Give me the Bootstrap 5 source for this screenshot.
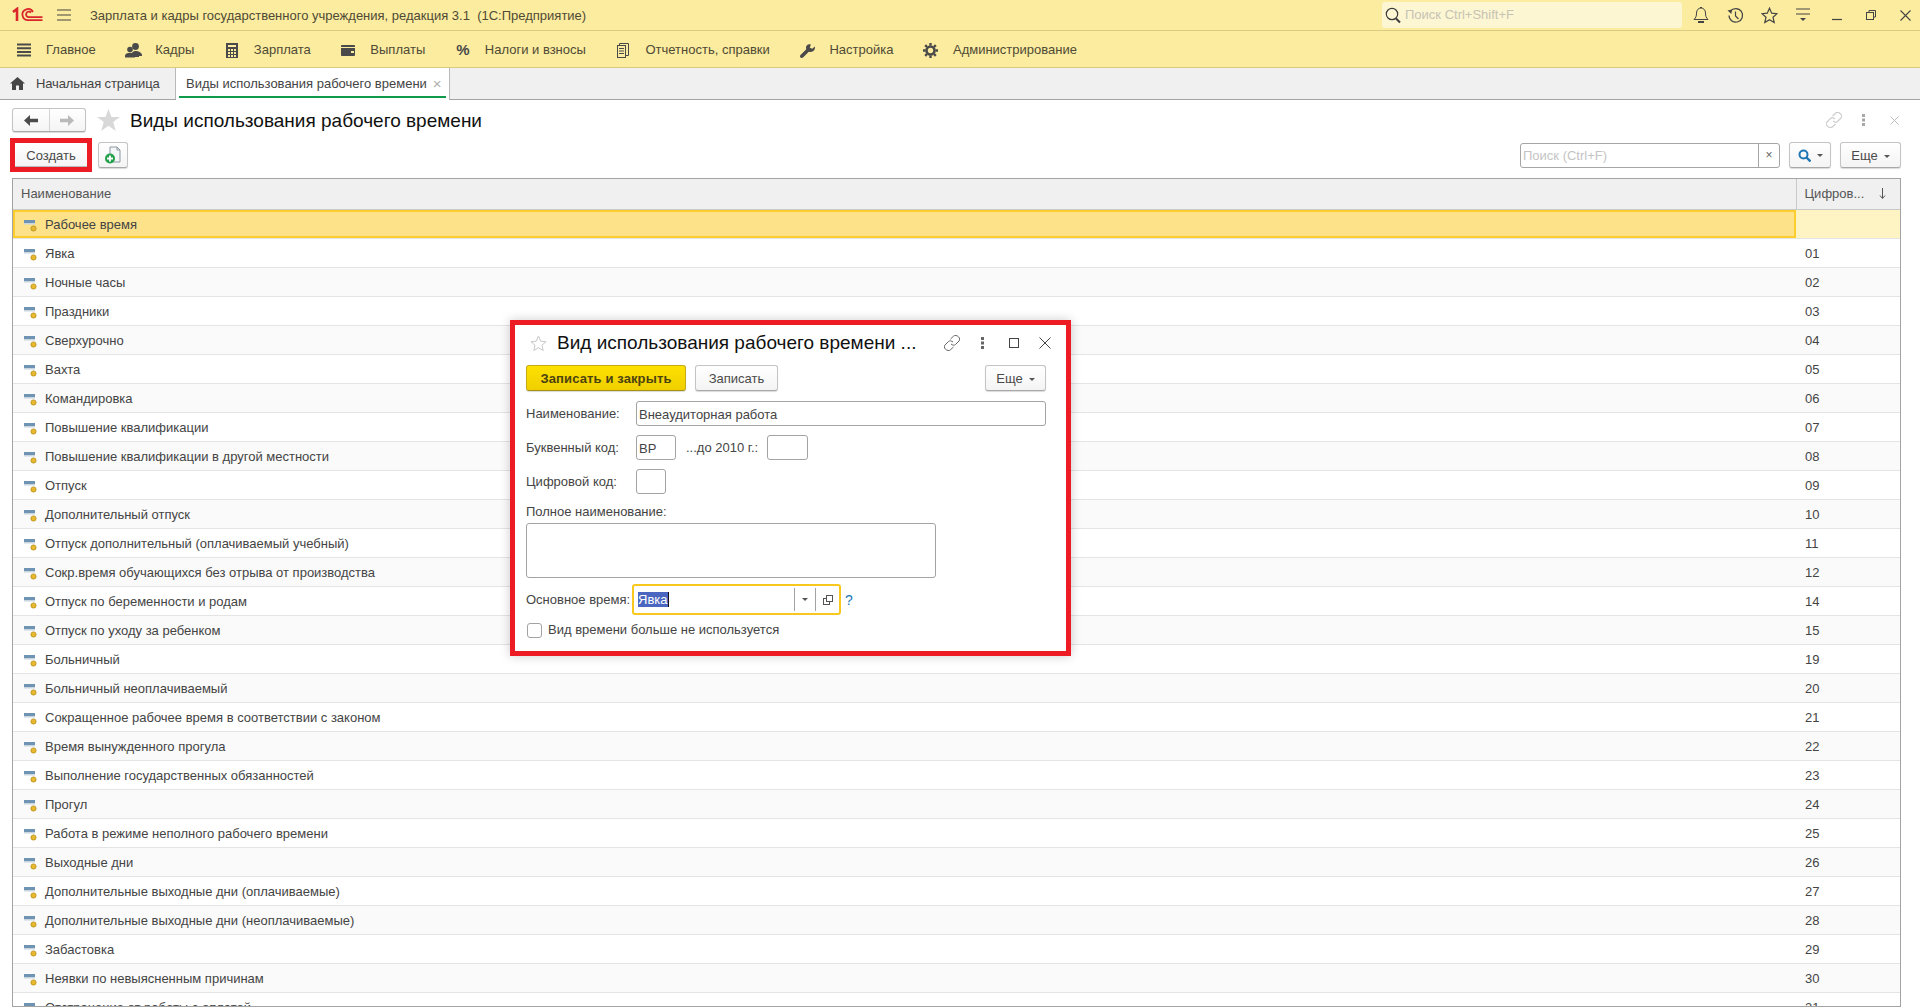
<!DOCTYPE html>
<html lang="ru">
<head>
<meta charset="UTF-8">
<title>Виды использования рабочего времени</title>
<link href="https://cdn.jsdelivr.net/npm/bootstrap@5.3.0/dist/css/bootstrap.min.css" rel="stylesheet">
<style>
    html, body { height: 100%; }
    body { font-family: "Liberation Sans", Arial, sans-serif; font-size: 13px; line-height: 16px; color: #444; overflow: hidden; background: #fff; }
    svg { display: block; flex: none; }

    /* верхние полосы */
    .top-bar { height: 31px; background: #fbec9f; border-bottom: 1px solid #d9cb80; flex: none; }
    .top-logo { margin-left: 12px; }
    .top-menu { margin-left: 10px; }
    .top-title { margin-left: 18px; padding-top: 2px; color: #4f4a35; white-space: pre; }
    .top-search { width: 300px; height: 26px; background: #fdf6d3; border-radius: 3px; padding-left: 3px; color: #c6c3b4; }
    .top-cell { width: 34px; height: 30px; }
    .top-cells { margin-left: 2px; margin-right: -2px; }
    .sect-bar { height: 37px; background: #fbec9f; border-bottom: 1px solid #d9cb80; padding: 2px 0 0 16px; flex: none; }
    .sect-item { margin-right: 29.6px; gap: 14px; color: #4f4a35; }
    .sect-ico { width: 16px; display: flex; justify-content: center; }
    .sect-pct { font-size: 15px; font-weight: 700; color: #4a4a4a; }
    .tab-bar { height: 32px; background: #f0f0f0; border-bottom: 1px solid #a3a3a3; flex: none; }
    .tab-home { width: 176px; padding-left: 10px; gap: 11px; border-right: 1px solid #b9b9b9; letter-spacing: -.12px; }
    .tab-open { width: 274px; background: #fff; border-right: 1px solid #b9b9b9; padding-left: 10px; position: relative; margin-bottom: -1px; color: #444; }
    .tab-open::after { content: ""; position: absolute; left: 3px; right: 3px; bottom: 2px; height: 2px; background: #0f9b4a; }
    .tab-close { margin-left: 6px; color: #b0b0b0; font-size: 15px; }

    /* кнопки 1С */
    .btn-1c { display: flex; align-items: center; justify-content: center; height: 26px; padding: 2px 0 0; font-size: 13px; line-height: 16px; color: #4a4a4a; background: linear-gradient(#fff, #f4f4f4); border: 1px solid #c4c4c4; border-bottom-color: #a8a8a8; border-radius: 3px; box-shadow: 0 1px 1px rgba(0,0,0,.15); }
    .btn-main { background: linear-gradient(#fde100, #f0cf00); border-color: #c7ab15; border-bottom-color: #a8900f; font-weight: 700; color: #4c4310; letter-spacing: .12px; }
    .caret-1c { width: 0; height: 0; border-left: 3px solid transparent; border-right: 3px solid transparent; border-top: 3px solid #555; margin-left: 6px; }

    /* шапка формы */
    .form-head { height: 24px; margin: 8px 0 0 12px; padding-right: 11px; flex: none; }
    .nav-pair { width: 74px; height: 24px; padding: 0; }
    .nav-half { height: 100%; flex: 1 1 0; }
    .nav-half + .nav-half { border-left: 1px solid #d4d4d4; }
    .nav-star { margin-left: 11px; }
    .big-title { font-size: 19px; line-height: 22px; padding-top: 2px; color: #111; margin-left: 10px; }
    .head-ico { width: 30px; }
    .tool-row { height: 34px; margin: 6px 0 0 10px; padding-right: 19px; flex: none; }
    .red-frame { border: 5px solid #ed1c24; width: 82px; height: 34px; }
    .red-frame .btn-1c { width: 100%; height: 24px; border: 0; border-bottom: 1px solid #bbb; border-radius: 0; box-shadow: none; }
    .add-btn { width: 30px; margin-left: 6px; padding: 0; }
    .find-btn { width: 42px; margin-left: 9px; padding: 0; }
    .more-list { width: 61px; margin-left: 9px; }
    .list-search { width: 260px; height: 25px; margin-left: auto; border: 1px solid #a5a5a5; border-radius: 3px; background: #fff; }
    .list-search-text { padding: 2px 0 0 2px; color: #c4c4c4; }
    .list-search-x { width: 21px; height: 100%; border-left: 1px solid #a5a5a5; color: #666; font-size: 12px; }

    /* список */
    .list-box { height: 829px; margin: 6px 19px 0 12px; border: 1px solid #a3a3a3; overflow: hidden; flex: none; }
    .list-table { table-layout: fixed; width: 100%; margin: 0; --bs-table-striped-bg: #fafafa; --bs-table-striped-color: #444; --bs-table-color: #444; --bs-table-bg: #fff; --bs-table-border-color: #e4e4e4; }
    .list-table th { height: 30px; padding: 0 8px; font-weight: 400; background: #f0f0f0; color: #555; vertical-align: middle; border-bottom: 1px solid #c8c8c8; }
    .list-table th + th { border-left: 1px solid #c8c8c8; padding: 0 14px 0 8px; }
    .col-code { width: 104px; }
    .list-table td { height: 29px; padding: 0 0 0 11px; vertical-align: middle; border-bottom: 1px solid #e4e4e4; }
    .list-table td + td { padding: 2px 0 0 9px; }
    .name-cell { display: flex; align-items: center; gap: 7px; }
    .name-cell span { padding-top: 2px; }
    .name-cell svg { margin-top: 3px; margin-bottom: -1px; }
    .list-table tr.row-cur td { --bs-table-accent-bg: transparent; background: #fef3c2; }
    .list-table tr.row-cur td:first-child { background: #fde28a; box-shadow: inset 0 0 0 2px #fbcd2d; }

    /* окно элемента */
    .item-win { position: absolute; left: 510px; top: 320px; width: 561px; height: 336px; border: 5px solid #ed1c24; background: #fff; padding: 0 20px 0 11px; box-shadow: 0 0 10px rgba(0,0,0,.2); }
    .win-head { height: 36px; }
    .win-star { margin-left: 4px; }
    .win-title { font-size: 19px; line-height: 22px; color: #111; margin-left: 10px; white-space: nowrap; min-width: 0; }
    .win-tools { margin-right: -14px; }
    .win-ico { width: 31px; }
    .win-btns { height: 26px; margin-top: 4px; gap: 9px; }
    .btn-save-close { width: 160px; }
    .btn-save { width: 83px; }
    .btn-more { width: 61px; margin-left: auto; }
    .fld { display: block; background: #fff; border: 1px solid #a3a3a3; border-radius: 3px; height: 25px; padding: 1px 2px 0; line-height: 23px; color: #444; }
    .fld-row { margin-top: 9px; height: 25px; }
    .win-btns + .fld-row { margin-top: 10px; }
    .fld-lbl { width: 110px; flex: none; padding-top: 1px; }
    .fld-code { width: 40px; }
    .lbl-old { margin-left: 10px; width: 81px; padding-top: 1px; }
    .fld-old { width: 41px; }
    .fld-num { width: 30px; }
    .lbl-full { margin-top: 10px; }
    .fld-full { width: 410px; height: 55px; margin-top: 3px; }
    .base-row { margin-top: 6px; height: 31px; }
    .base-lbl { width: 107px; }
    .base-fld { width: 209px; height: 31px; margin-left: -1px; border: 2px solid #f9c81f; padding: 0 0 0 4px; }
    .sel-text { background: #4a66c0; color: #fff; padding: 0; height: 15px; line-height: 15px; border-right: 1px solid #111; }
    .base-btn { width: 21px; height: 23px; border-left: 1px solid #a3a3a3; }
    .base-btn + .base-btn { width: 24px; }
    .chk-row { margin-top: 7px; }
    .chk-box { width: 15px; height: 15px; border: 1px solid #a3a3a3; border-radius: 3px; margin-left: 1px; margin-right: 6px; }
    .help-mark { color: #1c79b8; font-size: 14px; margin-left: 4px; }
</style>
</head>
<body class="d-flex flex-column">

<svg width="0" height="0" class="position-absolute">
    <defs>
        <symbol id="row-ico" viewBox="0 0 14 12">
            <rect x="0" y="0" width="11" height="3" fill="#6f93b3"/>
            <rect x="0" y="3" width="11" height="1.500" fill="#c9d6e0"/>
            <circle cx="9.500" cy="8.500" r="2.600" fill="#e8b92e" stroke="#b58f1a" stroke-width=".8"/>
        </symbol>
    </defs>
</svg>

<!-- заголовок окна -->
<div class="top-bar d-flex align-items-center">
    <svg class="top-logo" width="34" height="16" viewBox="0 0 34 16" fill="none" stroke="#d9262b">
        <path d="M1 5 L5 2 V14" stroke-width="2.600"/>
        <path d="M30.500 13.200 H16 A5.600 5.600 0 1 1 21 5" stroke-width="1.800"/>
        <path d="M30.500 10.200 H17 A2.800 2.800 0 1 1 19 5.600" stroke-width="1.800"/>
    </svg>
    <svg class="top-menu" width="16" height="12" viewBox="0 0 16 12" stroke="#444"><path d="M1 1H15M1 6H15M1 11H15" stroke-width="1.200"/></svg>
    <span class="top-title">Зарплата и кадры государственного учреждения, редакция 3.1  (1С:Предприятие)</span>
    <div class="top-search ms-auto d-flex align-items-center gap-1">
        <svg width="16" height="17" viewBox="0 0 16 17" fill="none" stroke="#3c3c3c"><circle cx="7" cy="7" r="5.700" stroke-width="1.200"/><path d="M11 11.500L15 15.500" stroke-width="2"/></svg>
        <span>Поиск Ctrl+Shift+F</span>
    </div>
    <div class="top-cells d-flex">
        <div class="top-cell d-flex align-items-center justify-content-center">
            <svg width="16" height="18" viewBox="0 0 16 18" fill="none" stroke="#444"><path d="M1 13.500 C3 11.500 3.500 10 3.500 7 C3.500 4 5.500 2 8 2 C10.500 2 12.500 4 12.500 7 C12.500 10 13 11.500 15 13.500Z"/><path d="M7 1.500H9"/><path d="M5 16H11" stroke-width="2"/></svg>
        </div>
        <div class="top-cell d-flex align-items-center justify-content-center">
            <svg width="17" height="17" viewBox="0 0 17 17" fill="none" stroke="#444"><path d="M3.400 4.200A6.800 6.800 0 1 1 2 8.500" stroke-width="1.200"/><path d="M0.500 3.500L5 2.500L4.400 7Z" fill="#444" stroke="none"/><path d="M8.500 4.500V9L11.500 12" stroke-width="1.200"/></svg>
        </div>
        <div class="top-cell d-flex align-items-center justify-content-center">
            <svg width="17" height="17" viewBox="0 0 17 17" fill="none" stroke="#444" stroke-width="1.200"><path d="M8.500 1.200L10.700 6.200L16 6.700L12 10.200L13.200 15.500L8.500 12.700L3.800 15.500L5 10.200L1 6.700L6.300 6.200Z"/></svg>
        </div>
        <div class="top-cell d-flex align-items-center justify-content-center">
            <svg width="16" height="14" viewBox="0 0 16 14" stroke="#444"><path d="M1 1H15M1 6H15"/><path d="M5 10H11L8 13Z" fill="#444" stroke="none"/></svg>
        </div>
        <div class="top-cell d-flex align-items-center justify-content-center">
            <svg width="10" height="12" viewBox="0 0 10 12" stroke="#444"><path d="M0 10.500H10" stroke-width="1.200"/></svg>
        </div>
        <div class="top-cell d-flex align-items-center justify-content-center">
            <svg width="10" height="10" viewBox="0 0 10 10" fill="none" stroke="#444"><rect x=".5" y="2.500" width="7" height="7"/><path d="M3 2.500V.5H9.500V7H7.500"/></svg>
        </div>
        <div class="top-cell d-flex align-items-center justify-content-center">
            <svg width="11" height="11" viewBox="0 0 11 11" stroke="#444"><path d="M.5 .5L10.500 10.500M10.500 .5L.5 10.500" stroke-width="1.100"/></svg>
        </div>
    </div>
</div>

<!-- панель разделов -->
<div class="sect-bar d-flex align-items-center">
    <div class="sect-item d-flex align-items-center">
        <span class="sect-ico"><svg width="14" height="14" viewBox="0 0 14 14" stroke="#4a4a4a" stroke-width="2"><path d="M0 1.500H14M0 5.200H14M0 8.900H14M0 12.600H14"/></svg></span>
        <span>Главное</span>
    </div>
    <div class="sect-item d-flex align-items-center">
        <span class="sect-ico"><svg width="17" height="15" viewBox="0 0 17 15" fill="#4a4a4a"><circle cx="10.500" cy="3.500" r="3.400"/><path d="M6 14C6 10 8 8 10.500 8C13 8 17 9.500 17 12V13H14V14Z"/><circle cx="5" cy="6.500" r="2.800"/><path d="M0 14V12.500C0 11 2.500 9.800 5 9.800C7.500 9.800 10 11 10 12.500V14.500H0Z"/></svg></span>
        <span>Кадры</span>
    </div>
    <div class="sect-item d-flex align-items-center">
        <span class="sect-ico"><svg width="12" height="15" viewBox="0 0 12 15" fill="#4a4a4a"><path fill-rule="evenodd" d="M0 0H12V15H0ZM2 2V4H10V2ZM2 6V8H4V6ZM5 6V8H7V6ZM8 6V8H10V6ZM2 9V11H4V9ZM5 9V11H7V9ZM8 9V11H10V9ZM2 12V14H4V12ZM5 12V14H7V12ZM8 12V14H10V12Z"/></svg></span>
        <span>Зарплата</span>
    </div>
    <div class="sect-item d-flex align-items-center">
        <span class="sect-ico"><svg width="14" height="11" viewBox="0 0 14 11" fill="#4a4a4a"><path d="M0 1C0 .5 .5 0 1 0H13C13.500 0 14 .5 14 1V2H0Z"/><path fill-rule="evenodd" d="M0 3H14V10C14 10.500 13.500 11 13 11H1C.5 11 0 10.500 0 10ZM10 6V8H13V6Z"/></svg></span>
        <span>Выплаты</span>
    </div>
    <div class="sect-item d-flex align-items-center">
        <span class="sect-ico sect-pct">%</span>
        <span>Налоги и взносы</span>
    </div>
    <div class="sect-item d-flex align-items-center">
        <span class="sect-ico"><svg width="12" height="15" viewBox="0 0 12 15" fill="none" stroke="#4a4a4a"><rect x=".5" y="2.500" width="8" height="12"/><path d="M2.500 2.500V.5H11.500V12.500H8.500M2 5.500H7M2 8H7M2 10.500H7"/></svg></span>
        <span>Отчетность, справки</span>
    </div>
    <div class="sect-item d-flex align-items-center">
        <span class="sect-ico"><svg width="15" height="15" viewBox="0 0 15 15" fill="#4a4a4a"><path d="M15 3.500L12.200 5.800L9.800 4.800L10.800 1.500C8.500 .6 6 2 6 4.500C6 5.200 6.100 5.700 6.300 6.200L.5 12C-.2 12.800 -.2 13.800 .5 14.500C1.200 15.200 2.200 15.200 3 14.500L8.800 8.700C11.800 9.800 15.500 7.500 15 3.500Z"/></svg></span>
        <span>Настройка</span>
    </div>
    <div class="sect-item d-flex align-items-center">
        <span class="sect-ico"><svg width="15" height="15" viewBox="0 0 15 15" fill="none" stroke="#4a4a4a"><circle cx="7.500" cy="7.500" r="4" stroke-width="2.600"/><path d="M7.500 0V2.500M7.500 12.500V15M0 7.500H2.500M12.500 7.500H15M2.200 2.200L4 4M11 11L12.800 12.800M12.800 2.200L11 4M4 11L2.200 12.800" stroke-width="2.400"/></svg></span>
        <span>Администрирование</span>
    </div>
</div>

<!-- вкладки -->
<div class="tab-bar d-flex">
    <div class="tab-home d-flex align-items-center">
        <svg width="15" height="13" viewBox="0 0 15 13" fill="#454545"><path d="M7.500 0L15 6.500H13V13H9V8.500H6V13H2V6.500H0Z"/></svg>
        <span>Начальная страница</span>
    </div>
    <div class="tab-open d-flex align-items-center">
        <span>Виды использования рабочего времени</span>
        <span class="tab-close">×</span>
    </div>
</div>

<!-- заголовок формы -->
<div class="form-head d-flex align-items-center">
    <div class="btn-1c nav-pair d-flex">
        <div class="nav-half d-flex align-items-center justify-content-center">
            <svg width="14" height="11" viewBox="0 0 14 11" fill="#4b4b4b"><path d="M0 5.500L6 0V3.800H14V7.200H6V11Z"/></svg>
        </div>
        <div class="nav-half d-flex align-items-center justify-content-center">
            <svg width="14" height="11" viewBox="0 0 14 11" fill="#b9b9b9"><path d="M14 5.500L8 0V3.800H0V7.200H8V11Z"/></svg>
        </div>
    </div>
    <svg class="nav-star" width="23" height="22" viewBox="0 0 23 22" fill="#d8d8d8"><path d="M11.500 0L14.500 8H23L16.200 13L18.800 22L11.500 16.800L4.200 22L6.800 13L0 8H8.500Z"/></svg>
    <span class="big-title">Виды использования рабочего времени</span>
    <div class="ms-auto d-flex align-items-center">
        <span class="head-ico d-flex justify-content-center"><svg width="16" height="16" viewBox="0 0 16 16" fill="none" stroke="#cfcfcf" stroke-width="1.200"><path d="M6.500 4L9.500 1.200C10.800 0 13 .3 14.500 1.800C16 3.300 16 5 15 6L11.500 9.500C10.300 10.600 8.500 10.300 7 9"/><path d="M9.500 12L6.500 14.800C5.200 16 3 15.700 1.500 14.200C0 12.700 0 11 1 10L4.500 6.500C5.700 5.400 7.500 5.700 9 7"/></svg></span>
        <span class="head-ico d-flex justify-content-center"><svg width="4" height="12" viewBox="0 0 4 12" fill="#a8a8a8"><rect x="0" y="0" width="3" height="3"/><rect x="0" y="4.500" width="3" height="3"/><rect x="0" y="9" width="3" height="3"/></svg></span>
        <span class="head-ico d-flex justify-content-center"><svg width="9" height="9" viewBox="0 0 9 9" stroke="#bdbdbd"><path d="M.5 .5L8.500 8.500M8.500 .5L.5 8.500"/></svg></span>
    </div>
</div>

<!-- командная панель -->
<div class="tool-row d-flex align-items-center">
    <div class="red-frame">
        <button class="btn-1c">Создать</button>
    </div>
    <button class="btn-1c add-btn">
        <svg width="18" height="18" viewBox="0 0 18 18"><path d="M6 1H13L16 4V16H6Z" fill="#f4f6f8" stroke="#8b98a3"/><path d="M13 1V4H16" fill="none" stroke="#8b98a3"/><circle cx="6" cy="12.500" r="5" fill="#22a04a"/><path d="M3 12.500H9M6 9.500V15.500" stroke="#fff" stroke-width="1.800"/></svg>
    </button>
    <div class="list-search d-flex align-items-center">
        <span class="list-search-text flex-grow-1">Поиск (Ctrl+F)</span>
        <span class="list-search-x d-flex align-items-center justify-content-center">×</span>
    </div>
    <button class="btn-1c find-btn">
        <svg width="13" height="13" viewBox="0 0 13 13" fill="none" stroke="#1e76b4"><circle cx="5.500" cy="5.500" r="4" stroke-width="2"/><path d="M8.500 8.500L12.500 12.500" stroke-width="2.400"/></svg>
        <span class="caret-1c"></span>
    </button>
    <button class="btn-1c more-list">Еще<span class="caret-1c"></span></button>
</div>

<!-- таблица -->
<div class="list-box">
    <table class="table table-striped list-table">
        <colgroup><col><col class="col-code"></colgroup>
        <thead>
            <tr><th>Наименование</th><th><div class="d-flex justify-content-between align-items-center"><span>Цифров...</span><svg width="7" height="11" viewBox="0 0 7 11" stroke="#555" fill="none"><path d="M3.500 0V10M1 7.500L3.500 10.500L6 7.500"/></svg></div></th></tr>
        </thead>
        <tbody>
            <tr class="row-cur"><td><div class="name-cell"><svg width="14" height="12"><use href="#row-ico"/></svg><span>Рабочее время</span></div></td><td></td></tr>
            <tr><td><div class="name-cell"><svg width="14" height="12"><use href="#row-ico"/></svg><span>Явка</span></div></td><td>01</td></tr>
            <tr><td><div class="name-cell"><svg width="14" height="12"><use href="#row-ico"/></svg><span>Ночные часы</span></div></td><td>02</td></tr>
            <tr><td><div class="name-cell"><svg width="14" height="12"><use href="#row-ico"/></svg><span>Праздники</span></div></td><td>03</td></tr>
            <tr><td><div class="name-cell"><svg width="14" height="12"><use href="#row-ico"/></svg><span>Сверхурочно</span></div></td><td>04</td></tr>
            <tr><td><div class="name-cell"><svg width="14" height="12"><use href="#row-ico"/></svg><span>Вахта</span></div></td><td>05</td></tr>
            <tr><td><div class="name-cell"><svg width="14" height="12"><use href="#row-ico"/></svg><span>Командировка</span></div></td><td>06</td></tr>
            <tr><td><div class="name-cell"><svg width="14" height="12"><use href="#row-ico"/></svg><span>Повышение квалификации</span></div></td><td>07</td></tr>
            <tr><td><div class="name-cell"><svg width="14" height="12"><use href="#row-ico"/></svg><span>Повышение квалификации в другой местности</span></div></td><td>08</td></tr>
            <tr><td><div class="name-cell"><svg width="14" height="12"><use href="#row-ico"/></svg><span>Отпуск</span></div></td><td>09</td></tr>
            <tr><td><div class="name-cell"><svg width="14" height="12"><use href="#row-ico"/></svg><span>Дополнительный отпуск</span></div></td><td>10</td></tr>
            <tr><td><div class="name-cell"><svg width="14" height="12"><use href="#row-ico"/></svg><span>Отпуск дополнительный (оплачиваемый учебный)</span></div></td><td>11</td></tr>
            <tr><td><div class="name-cell"><svg width="14" height="12"><use href="#row-ico"/></svg><span>Сокр.время обучающихся без отрыва от производства</span></div></td><td>12</td></tr>
            <tr><td><div class="name-cell"><svg width="14" height="12"><use href="#row-ico"/></svg><span>Отпуск по беременности и родам</span></div></td><td>14</td></tr>
            <tr><td><div class="name-cell"><svg width="14" height="12"><use href="#row-ico"/></svg><span>Отпуск по уходу за ребенком</span></div></td><td>15</td></tr>
            <tr><td><div class="name-cell"><svg width="14" height="12"><use href="#row-ico"/></svg><span>Больничный</span></div></td><td>19</td></tr>
            <tr><td><div class="name-cell"><svg width="14" height="12"><use href="#row-ico"/></svg><span>Больничный неоплачиваемый</span></div></td><td>20</td></tr>
            <tr><td><div class="name-cell"><svg width="14" height="12"><use href="#row-ico"/></svg><span>Сокращенное рабочее время в соответствии с законом</span></div></td><td>21</td></tr>
            <tr><td><div class="name-cell"><svg width="14" height="12"><use href="#row-ico"/></svg><span>Время вынужденного прогула</span></div></td><td>22</td></tr>
            <tr><td><div class="name-cell"><svg width="14" height="12"><use href="#row-ico"/></svg><span>Выполнение государственных обязанностей</span></div></td><td>23</td></tr>
            <tr><td><div class="name-cell"><svg width="14" height="12"><use href="#row-ico"/></svg><span>Прогул</span></div></td><td>24</td></tr>
            <tr><td><div class="name-cell"><svg width="14" height="12"><use href="#row-ico"/></svg><span>Работа в режиме неполного рабочего времени</span></div></td><td>25</td></tr>
            <tr><td><div class="name-cell"><svg width="14" height="12"><use href="#row-ico"/></svg><span>Выходные дни</span></div></td><td>26</td></tr>
            <tr><td><div class="name-cell"><svg width="14" height="12"><use href="#row-ico"/></svg><span>Дополнительные выходные дни (оплачиваемые)</span></div></td><td>27</td></tr>
            <tr><td><div class="name-cell"><svg width="14" height="12"><use href="#row-ico"/></svg><span>Дополнительные выходные дни (неоплачиваемые)</span></div></td><td>28</td></tr>
            <tr><td><div class="name-cell"><svg width="14" height="12"><use href="#row-ico"/></svg><span>Забастовка</span></div></td><td>29</td></tr>
            <tr><td><div class="name-cell"><svg width="14" height="12"><use href="#row-ico"/></svg><span>Неявки по невыясненным причинам</span></div></td><td>30</td></tr>
            <tr><td><div class="name-cell"><svg width="14" height="12"><use href="#row-ico"/></svg><span>Отстранение от работы с оплатой</span></div></td><td>31</td></tr>
        </tbody>
    </table>
</div>

<!-- окно элемента поверх списка -->
<div class="item-win">
    <div class="win-head d-flex align-items-center">
        <svg class="win-star" width="17" height="17" viewBox="0 0 17 17" fill="none" stroke="#c8c8c8"><path d="M8.500 1L10.700 6.200L16 6.700L12 10.200L13.200 15.500L8.500 12.700L3.800 15.500L5 10.200L1 6.700L6.300 6.200Z"/></svg>
        <span class="win-title flex-grow-1">Вид использования рабочего времени ...</span>
        <div class="win-tools d-flex align-items-center">
            <span class="win-ico d-flex justify-content-center"><svg width="16" height="16" viewBox="0 0 16 16" fill="none" stroke="#666"><path d="M6.500 4L9.500 1.200C10.800 0 13 .3 14.500 1.800C16 3.300 16 5 15 6L11.500 9.500C10.300 10.600 8.500 10.300 7 9"/><path d="M9.500 12L6.500 14.800C5.200 16 3 15.700 1.500 14.200C0 12.700 0 11 1 10L4.500 6.500C5.700 5.400 7.500 5.700 9 7"/></svg></span>
            <span class="win-ico d-flex justify-content-center"><svg width="4" height="12" viewBox="0 0 4 12" fill="#666"><rect width="3" height="3"/><rect y="4.500" width="3" height="3"/><rect y="9" width="3" height="3"/></svg></span>
            <span class="win-ico d-flex justify-content-center"><svg width="10" height="10" viewBox="0 0 10 10" fill="none" stroke="#444"><rect x=".5" y=".5" width="9" height="9"/></svg></span>
            <span class="win-ico d-flex justify-content-center"><svg width="12" height="12" viewBox="0 0 12 12" stroke="#444"><path d="M.5 .5L11.500 11.500M11.500 .5L.5 11.500"/></svg></span>
        </div>
    </div>
    <div class="win-btns d-flex">
        <button class="btn-1c btn-main btn-save-close">Записать и закрыть</button>
        <button class="btn-1c btn-save">Записать</button>
        <button class="btn-1c btn-more">Еще<span class="caret-1c"></span></button>
    </div>
    <div class="fld-row d-flex align-items-center">
        <span class="fld-lbl">Наименование:</span>
        <span class="fld flex-grow-1">Внеаудиторная работа</span>
    </div>
    <div class="fld-row d-flex align-items-center">
        <span class="fld-lbl">Буквенный код:</span>
        <span class="fld fld-code">ВР</span>
        <span class="lbl-old">...до 2010 г.:</span>
        <span class="fld fld-old"></span>
    </div>
    <div class="fld-row d-flex align-items-center">
        <span class="fld-lbl">Цифровой код:</span>
        <span class="fld fld-num"></span>
    </div>
    <div class="lbl-full">Полное наименование:</div>
    <span class="fld fld-full"></span>
    <div class="base-row d-flex align-items-center">
        <span class="fld-lbl base-lbl">Основное время:</span>
        <div class="fld base-fld d-flex align-items-center">
            <span class="sel-text">Явка</span>
            <span class="base-btn d-flex align-items-center justify-content-center ms-auto"><span class="caret-1c m-0"></span></span>
            <span class="base-btn d-flex align-items-center justify-content-center">
                <svg width="10" height="10" viewBox="0 0 10 10" fill="none" stroke="#555"><rect x=".5" y="3.500" width="6" height="6"/><rect x="3.500" y=".5" width="6" height="6" fill="#fff"/></svg>
            </span>
        </div>
        <span class="help-mark">?</span>
    </div>
    <div class="chk-row d-flex align-items-center">
        <span class="chk-box"></span>
        <span>Вид времени больше не используется</span>
    </div>
</div>

<script src="https://cdn.jsdelivr.net/npm/bootstrap@5.3.0/dist/js/bootstrap.bundle.min.js"></script>
</body>
</html>
